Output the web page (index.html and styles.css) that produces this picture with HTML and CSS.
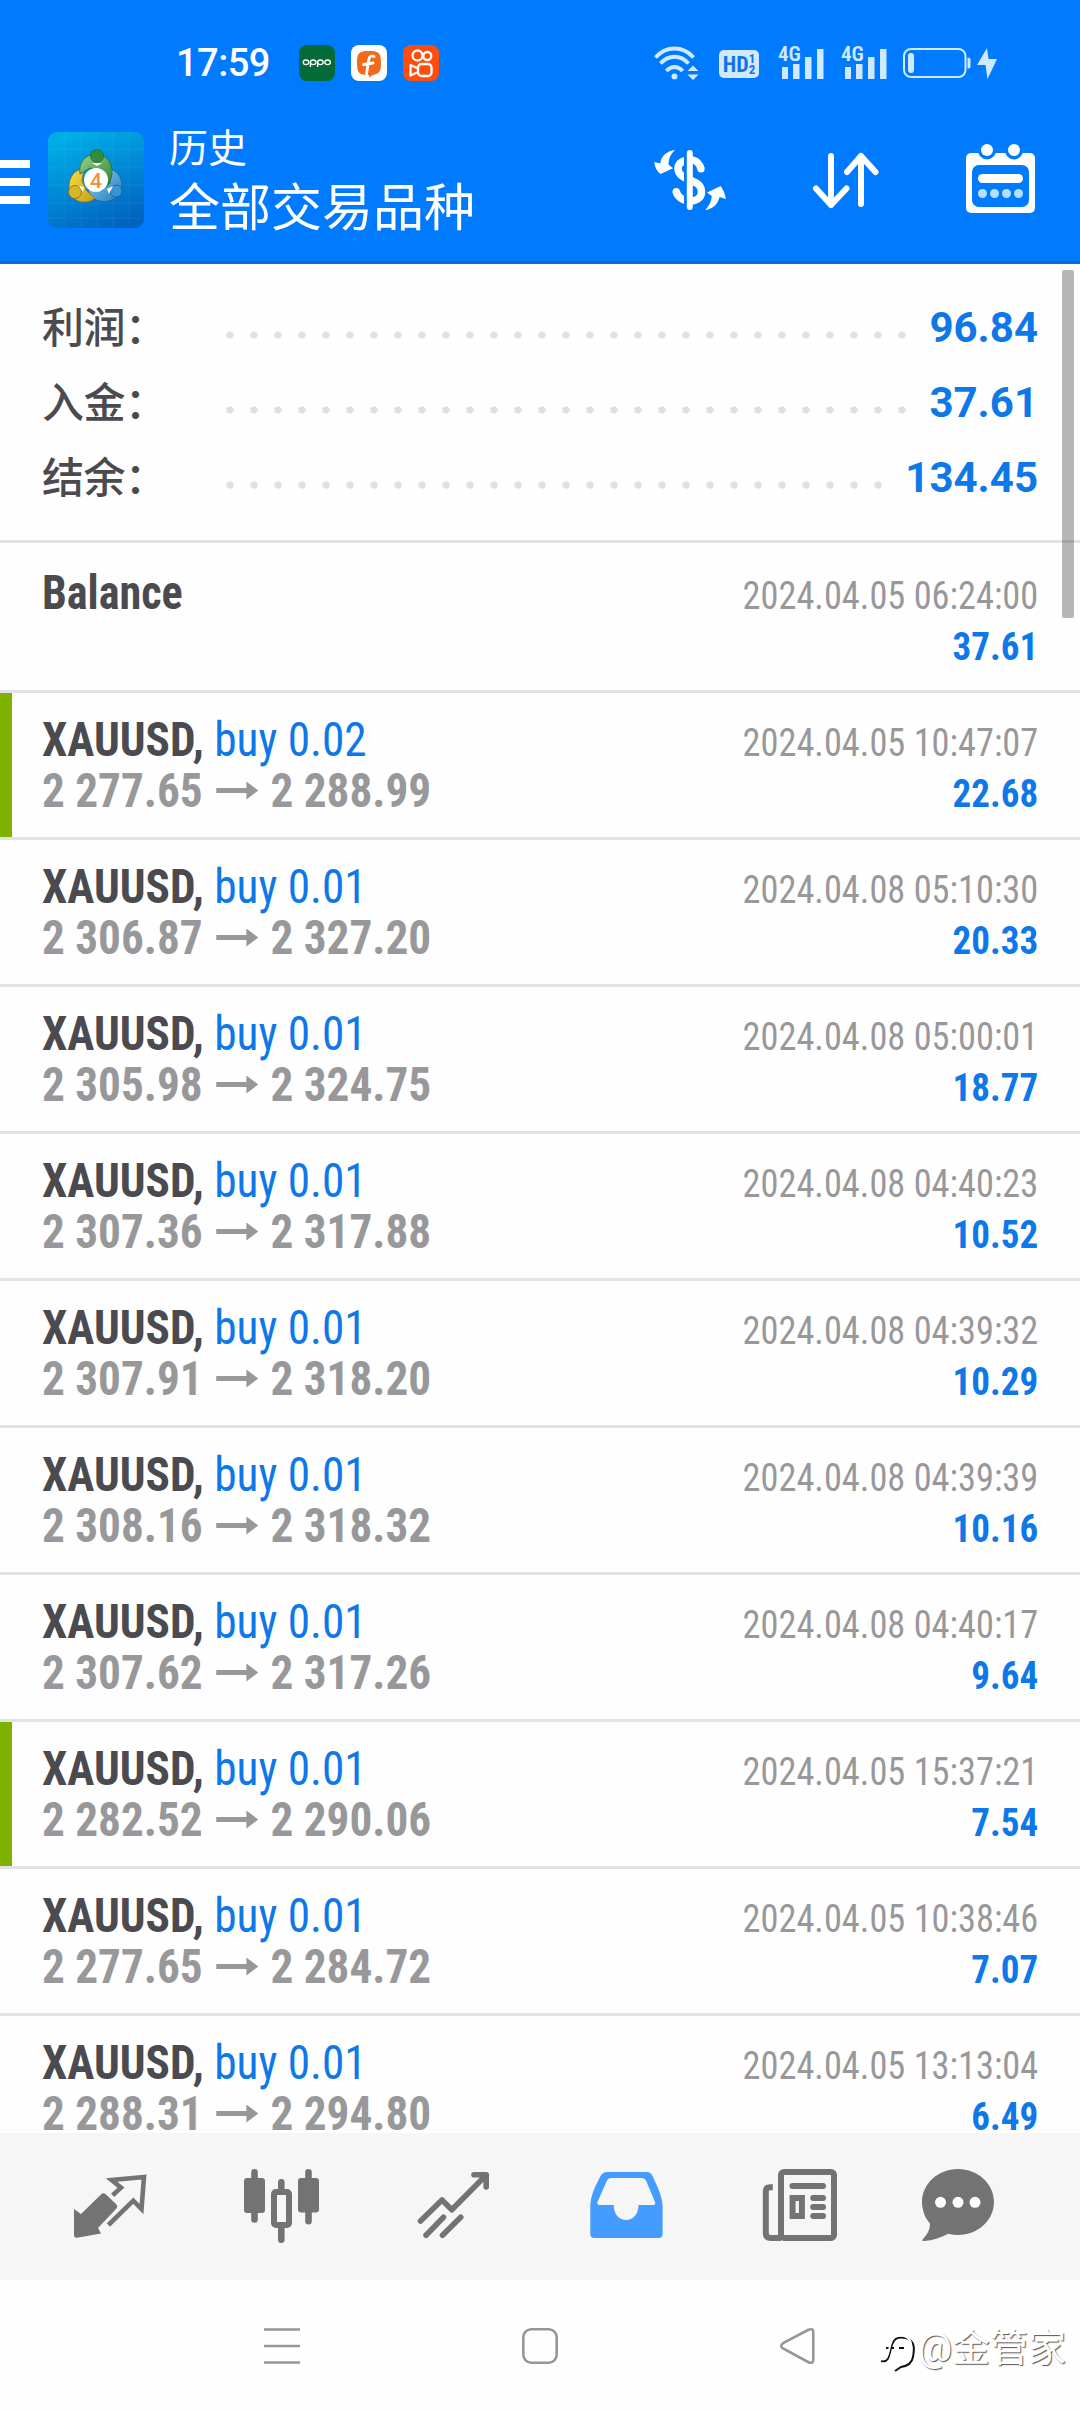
FILE: index.html
```
<!DOCTYPE html>
<html lang="zh-CN">
<head>
    <meta charset="UTF-8">
    <meta name="viewport" content="width=device-width, initial-scale=1.0">
    <title>历史</title>
    <link rel="stylesheet" href="styles.css">
</head>
<body>
    <div class="header">
        <div class="status">
            <span class="time">17:59</span>
            <svg class="app" viewBox="0 0 36 36">
                <rect width="36" height="36" rx="8" fill="#046a38"/>
                <g fill="none" stroke="#fff" stroke-width="1.3">
                    <ellipse cx="7" cy="17.3" rx="2.8" ry="2.3"/>
                    <ellipse cx="14.2" cy="17.3" rx="2.8" ry="2.3"/>
                    <path d="M11.4 17v5"/>
                    <ellipse cx="21.4" cy="17.3" rx="2.8" ry="2.3"/>
                    <path d="M18.6 17v5"/>
                    <ellipse cx="28.6" cy="17.3" rx="2.8" ry="2.3"/>
                </g>
            </svg>
            <svg class="app" viewBox="0 0 36 36">
                <rect width="36" height="36" rx="8" fill="#fff"/>
                <path d="M18 6c10 0 12 2 12 12 0 9-2 11-9 12.2L18 33l.5-2.800C8 30 6 28 6 18 6 8 8 6 18 6z" fill="#f26a1b"/>
                <path d="M23 11.500c-3-1.500-4.700 0-5.200 3L15.500 29M12.500 19.500l9.500-1.500" fill="none" stroke="#fff" stroke-width="2.800" stroke-linecap="round"/>
            </svg>
            <svg class="app" viewBox="0 0 36 36">
                <rect width="36" height="36" rx="8" fill="#ff4d0d"/>
                <g fill="none" stroke="#fff" stroke-width="2.300">
                    <circle cx="14.500" cy="10.500" r="5"/>
                    <circle cx="24.300" cy="11" r="4"/>
                    <rect x="15" y="19" width="13.500" height="12" rx="3.500"/>
                    <path d="M14 23l-6.500-3v10.500l6.500-3" stroke-linejoin="round"/>
                </g>
            </svg>

            <svg class="wifi" viewBox="0 0 44 34">
                <g fill="none" stroke="#cfeaff" stroke-width="4">
                    <path d="M1.500 11.500C12-.5 29-.5 39.500 11.500"/>
                    <path d="M6.500 17.500c8-9 20-9 28 0"/>
                    <path d="M12.300 25c5-5.500 11.400-5.500 16.400 0"/>
                </g>
                <circle cx="20.500" cy="30.500" r="3" fill="#cfeaff"/>
                <path d="M33.500 25h11L39 19.500zM33.500 28.500h11L39 34z" fill="#cfeaff"/>
            </svg>
            <span class="hd">HD<span class="hd-num"><i>1</i><i>2</i></span></span>
            <span class="signal">
                <span class="net">4G</span>
                <svg viewBox="0 0 46 32"><path d="M4 20h6v12H4zM15 17h6.500v15H15zM27 10h6.500v22H27zM39 2h6.500v30H39z" fill="#cfeaff"/></svg>
            </span>
            <span class="signal">
                <span class="net">4G</span>
                <svg viewBox="0 0 46 32"><path d="M4 20h6v12H4zM15 17h6.500v15H15zM27 10h6.500v22H27zM39 2h6.500v30H39z" fill="#cfeaff"/></svg>
            </span>
            <svg class="battery" viewBox="0 0 96 32">
                <rect x="1" y="2" width="61.500" height="28" rx="7" fill="none" stroke="#cfeaff" stroke-width="2"/>
                <rect x="5" y="6" width="6" height="20" rx="3" fill="#cfeaff"/>
                <path d="M64.500 10.500q3 0 3 2v7q0 2-3 2z" fill="#cfeaff"/>
                <path d="M84 1L74 18h8.500L84.500 32 94 12h-8.500z" fill="#cfeaff"/>
            </svg>
        </div>

        <div class="toolbar">
            <div class="menu"><i></i><i></i><i></i></div>
            <svg class="logo" viewBox="0 0 96 96">
                <defs>
                    <linearGradient id="bg" x1="0.3" y1="0" x2="0.7" y2="1">
                        <stop offset="0" stop-color="#00aee6"/>
                        <stop offset="0.5" stop-color="#0088d6"/>
                        <stop offset="1" stop-color="#0063be"/>
                    </linearGradient>
                    <linearGradient id="green" x2="1" y2="1"><stop offset="0" stop-color="#9bd08a"/><stop offset="1" stop-color="#2b8334"/></linearGradient>
                    <linearGradient id="yellow" x2="1" y2="1"><stop offset="0" stop-color="#f6df3c"/><stop offset="1" stop-color="#c59d1d"/></linearGradient>
                    <linearGradient id="blue" x2="1" y2="1"><stop offset="0" stop-color="#9bd6f5"/><stop offset="1" stop-color="#1878bd"/></linearGradient>
                </defs>
                <rect width="96" height="96" rx="9" fill="url(#bg)"/>
                <path d="M17 0v96M33 0v96M49 0v96M65 0v96M81 0v96M0 17h96M0 35h96M0 53h96M0 71h96M0 86h96" stroke="#fff" stroke-opacity="0.06" fill="none"/>
                <g stroke-width="0.8">
                    <path d="M61 36c11 4 16 14 11 25-3 7-13 10-21 8-6-2-10-6-11-12l14 2 8-8z" fill="url(#blue)" stroke="#135f99"/>
                    <path d="M36 37c-10 0-15 9-15 18 0 10 8 16 17 15 4 0 7-2 9-4l-8-7-5-10z" fill="url(#yellow)" stroke="#80701e"/>
                    <path d="M32 42c-2-12 6-20 16-20 11 0 17 10 16 20-1 6-3 10-6 13l-4-16-12-3z" fill="url(#green)" stroke="#226b33"/>
                    <circle cx="49" cy="24" r="6.5" fill="#338d3b" stroke="#226b33"/>
                    <circle cx="27" cy="60" r="6.5" fill="#d7b629" stroke="#80701e"/>
                    <circle cx="68" cy="59" r="6" fill="#3795d1" stroke="#135f99"/>
                </g>
                <path d="M49 34l-5-3h10zM36 55l-5-1 4 6zM59 57l6-3-4 8z" fill="#fff"/>
                <circle cx="48" cy="48" r="12" fill="#fff"/>
                <text x="48" y="55.5" text-anchor="middle" class="four">4</text>
            </svg>
            <div class="titles">
                <div class="sub">历史</div>
                <div class="main">全部交易品种</div>
            </div>
            <svg class="tool" viewBox="0 0 72 72">
                <path d="M47 25c-1-5-5-9-10-9-8 0-13 3-13 8.500 0 6.500 6 9 12 11.500 7 3 11.500 5 11.500 12 0 6-5.500 9-11.500 9-7 0-12.500-4-14-10" fill="none" stroke="#fff" stroke-width="7.500"/>
                <circle cx="47" cy="25" r="3.600" fill="#fff"/>
                <circle cx="22.200" cy="47.500" r="3.600" fill="#fff"/>
                <path d="M31.500 10v52M40 10" stroke="#007aff" stroke-width="3"/>
                <path d="M35.800 9v54" stroke="#fff" stroke-width="6" stroke-linecap="round"/>
                <path d="M21 6c-5 5-6 8-6.500 14.500L19 24.300 6.500 30Q1 26 .3 18l6 1.500C7 11 14 7 21 6zM51.300 66c4-5 6-8 6.500-14L53 48.500 66.800 42Q71 48 72 55l-6.500-2C64 60 59 65 51.300 66z" fill="#fff"/>
            </svg>
            <svg class="tool" viewBox="0 0 72 72">
                <path d="M21 12v49M6 44.500L21 61l15.500-16.500M51 60V12M37 28L51 12l14.500 16" fill="none" stroke="#fff" stroke-width="6" stroke-linecap="round" stroke-linejoin="round"/>
            </svg>
            <svg class="tool" viewBox="0 0 72 72">
                <rect x="0" y="9" width="69" height="60" rx="5" fill="#fff"/>
                <circle cx="21" cy="6.500" r="9" fill="#007aff"/>
                <circle cx="48" cy="6.500" r="9" fill="#007aff"/>
                <rect x="6" y="21" width="57" height="42" rx="7" fill="#007aff"/>
                <circle cx="21" cy="6" r="6" fill="#fff"/>
                <circle cx="48" cy="6" r="6" fill="#fff"/>
                <rect x="12" y="30" width="45" height="9" rx="4.500" fill="#fff"/>
                <g fill="#b5e0ff"><circle cx="16.500" cy="49.500" r="4.500"/><circle cx="28.500" cy="49.500" r="4.500"/><circle cx="40.500" cy="49.500" r="4.500"/><circle cx="52.500" cy="49.500" r="4.500"/></g>
            </svg>
        </div>
    </div>

    <div class="content">
        <div class="scrollbar"></div>

        <div class="summary">
            <div class="line"><span class="label">利润：</span><span class="dots"></span><b>96.84</b></div>
            <div class="line"><span class="label">入金：</span><span class="dots"></span><b>37.61</b></div>
            <div class="line"><span class="label">结余：</span><span class="dots"></span><b>134.45</b></div>
        </div>

        <div class="deal balance">
            <div class="left"><div class="symbol">Balance</div></div>
            <div class="right"><div class="date">2024.04.05 06:24:00</div><div class="profit">37.61</div></div>
        </div>
        <div class="deal tp">
            <div class="left"><div class="symbol">XAUUSD, <span>buy 0.02</span></div><div class="price">2 277.65<i class="arrow"></i>2 288.99</div></div>
            <div class="right"><div class="date">2024.04.05 10:47:07</div><div class="profit">22.68</div></div>
        </div>
        <div class="deal">
            <div class="left"><div class="symbol">XAUUSD, <span>buy 0.01</span></div><div class="price">2 306.87<i class="arrow"></i>2 327.20</div></div>
            <div class="right"><div class="date">2024.04.08 05:10:30</div><div class="profit">20.33</div></div>
        </div>
        <div class="deal">
            <div class="left"><div class="symbol">XAUUSD, <span>buy 0.01</span></div><div class="price">2 305.98<i class="arrow"></i>2 324.75</div></div>
            <div class="right"><div class="date">2024.04.08 05:00:01</div><div class="profit">18.77</div></div>
        </div>
        <div class="deal">
            <div class="left"><div class="symbol">XAUUSD, <span>buy 0.01</span></div><div class="price">2 307.36<i class="arrow"></i>2 317.88</div></div>
            <div class="right"><div class="date">2024.04.08 04:40:23</div><div class="profit">10.52</div></div>
        </div>
        <div class="deal">
            <div class="left"><div class="symbol">XAUUSD, <span>buy 0.01</span></div><div class="price">2 307.91<i class="arrow"></i>2 318.20</div></div>
            <div class="right"><div class="date">2024.04.08 04:39:32</div><div class="profit">10.29</div></div>
        </div>
        <div class="deal">
            <div class="left"><div class="symbol">XAUUSD, <span>buy 0.01</span></div><div class="price">2 308.16<i class="arrow"></i>2 318.32</div></div>
            <div class="right"><div class="date">2024.04.08 04:39:39</div><div class="profit">10.16</div></div>
        </div>
        <div class="deal">
            <div class="left"><div class="symbol">XAUUSD, <span>buy 0.01</span></div><div class="price">2 307.62<i class="arrow"></i>2 317.26</div></div>
            <div class="right"><div class="date">2024.04.08 04:40:17</div><div class="profit">9.64</div></div>
        </div>
        <div class="deal tp">
            <div class="left"><div class="symbol">XAUUSD, <span>buy 0.01</span></div><div class="price">2 282.52<i class="arrow"></i>2 290.06</div></div>
            <div class="right"><div class="date">2024.04.05 15:37:21</div><div class="profit">7.54</div></div>
        </div>
        <div class="deal">
            <div class="left"><div class="symbol">XAUUSD, <span>buy 0.01</span></div><div class="price">2 277.65<i class="arrow"></i>2 284.72</div></div>
            <div class="right"><div class="date">2024.04.05 10:38:46</div><div class="profit">7.07</div></div>
        </div>
        <div class="deal">
            <div class="left"><div class="symbol">XAUUSD, <span>buy 0.01</span></div><div class="price">2 288.31<i class="arrow"></i>2 294.80</div></div>
            <div class="right"><div class="date">2024.04.05 13:13:04</div><div class="profit">6.49</div></div>
        </div>
    </div>

    <div class="tabs">
        <svg viewBox="0 0 96 96">
            <path d="M12 50l7 5 20-19.500q2.300-2.500 5 0L54 45q2.500 2.500 0 5L36 69l3 5.500-24 4.200q-3 .3-3-2.700z" fill="#737373"/>
            <path d="M50.600 36.300l8.400-7.600-9.400-7.700L82 18l-2.500 32-8.200-8.300L46.400 66" fill="none" stroke="#737373" stroke-width="4.600"/>
        </svg>
        <svg viewBox="0 0 96 96">
            <path d="M20.500 13.200v47.300M47.300 23.200V32M47.300 68v12.700M74.500 13.200v49" stroke="#737373" stroke-width="6.600" stroke-linecap="round"/>
            <rect x="10" y="19" width="21" height="35" rx="3" fill="#737373"/>
            <rect x="40" y="33" width="15" height="33" rx="2" fill="none" stroke="#737373" stroke-width="6"/>
            <rect x="64" y="19" width="21" height="34.500" rx="3" fill="#737373"/>
        </svg>
        <svg viewBox="0 0 96 96">
            <path d="M14.500 62L36 41l9.800 9.700L80.200 16M68 15.700h12.200V28M20 76.300l17.500-18M36.500 76.300l18.200-18" fill="none" stroke="#737373" stroke-width="5.600" stroke-linecap="round" stroke-linejoin="round"/>
        </svg>
        <svg viewBox="0 0 96 96">
            <path d="M29 13h40q4 0 6 5c4 9 9.600 19 9.600 30v27q0 4-4 4H16.300q-4 0-4-4V48c0-11 5-21 9.700-30q2.500-5 7-5zM33 19q-3 0-4 2.500L19.500 43q-1 3 2 3h14.200c0 20 24.800 20 24.800 0H75q3 0 2-3l-9-21.500Q67 19 64 19z" fill="#459cff" fill-rule="evenodd"/>
        </svg>
        <svg viewBox="0 0 96 96">
            <g fill="none" stroke="#737373" stroke-width="6">
                <rect x="31" y="13" width="53" height="66" rx="3"/>
                <path d="M22.800 28.300H20q-4.200 0-4.200 4.200V74q0 5 5 5H31"/>
                <rect x="42.600" y="39" width="9.300" height="18"/>
                <path d="M42.500 27h30.500M63.200 38.900h9.800M63.200 47.900h9.800M63.200 56.900h9.800" stroke-linecap="round"/>
            </g>
        </svg>
        <svg class="chat" viewBox="0 0 96 96">
            <path d="M49 10c20 0 36 15 36 33S69 76 49 76q-5 0-9.500-1.200C31 79 24 81.500 15 82q-3 0-1-2 7-7 7-15.500C16 59 13 51 13 43c0-18 16-33 36-33z" fill="#737373"/>
            <g fill="#fff"><circle cx="31.500" cy="43.300" r="5.500"/><circle cx="49" cy="43.300" r="5.500"/><circle cx="66" cy="43.300" r="5.500"/></g>
        </svg>
    </div>

    <div class="nav">
        <svg viewBox="0 0 36 36"><path d="M0 1.500h36M0 18h36M0 34.500h36"/></svg>
        <svg viewBox="0 0 36 36"><rect x="1.300" y="1.300" width="33.400" height="33.400" rx="8"/></svg>
        <svg viewBox="0 0 36 36"><path d="M3 15.200L28.500 1.800q4.800-2 4.800 2.500v27.400q0 4.500-4.800 2.500L3 20.500q-3.500-2.600 0-5.300z"/></svg>
    </div>

    <div class="watermark">
        <svg viewBox="0 0 38 42">
            <path d="M2 30c7 2 8-4 10-13 2-9 6-12 15-10 8 3 9 8 7 19-1 6-5 9-12 10l-6 4M7 17h8M20 17h5" fill="none" stroke="#111" stroke-width="2"/>
            <path d="M1 28c7 2 8-4 10-13 2-9 6-12 14-10 8 3 8 8 6 18-1 6-5 9-12 10" fill="none" stroke="#fff" stroke-width="2"/>
        </svg>
        <span>@金管家</span>
    </div>
</body>
</html>
```

FILE: styles.css
```
body {
    margin: 0;
    width: 1080px;
    height: 2412px;
    position: relative;
    overflow: hidden;
    display: flex;
    flex-direction: column;
    background-color: #fefefe;
    font-family: Roboto, 'Noto Sans CJK SC', sans-serif;
}

i {
    font-style: normal;
}

svg {
    display: block;
    flex-shrink: 0;
    overflow: visible;
}

/* header */

.header {
    height: 261px;
    flex-shrink: 0;
    background-color: #007aff;
    border-bottom: 3px solid #1467d3;
    color: white;
}

.status {
    height: 36px;
    padding: 45px 0 0 176px;
    display: flex;
    align-items: center;
}

.time {
    width: 123px;
    flex-shrink: 0;
    font-size: 38px;
    font-weight: 500;
    letter-spacing: -0.5px;
}

.app {
    width: 36px;
    height: 36px;
    margin-right: 16px;
}

.wifi {
    width: 44px;
    height: 34px;
    margin-left: 199px;
}

.hd {
    width: 40px;
    height: 28px;
    flex-shrink: 0;
    margin-left: 21px;
    margin-top: 2px;
    border-radius: 5px;
    background-color: #cfeaff;
    color: #1473e6;
    display: flex;
    align-items: center;
    justify-content: center;
    font-size: 22px;
    font-weight: 700;
    font-stretch: 75%;
}

.hd-num {
    display: flex;
    flex-direction: column;
    font-size: 13px;
    line-height: 11px;
}

.signal {
    position: relative;
    width: 46px;
    flex-shrink: 0;
    margin-left: 17px;
}

.signal svg {
    width: 46px;
    height: 32px;
}

.net {
    position: absolute;
    left: 0;
    top: -3px;
    font-size: 21px;
    line-height: 21px;
    font-weight: 600;
    font-stretch: 75%;
    color: #cfeaff;
}

.hd + .signal {
    margin-left: 19px;
}

.battery {
    width: 96px;
    height: 32px;
    margin-left: 16px;
}

.toolbar {
    height: 120px;
    padding-top: 39px;
    display: flex;
    align-items: center;
}

.menu {
    width: 30px;
    flex-shrink: 0;
    margin-right: 18px;
    display: flex;
    flex-direction: column;
    gap: 10px;
    margin-top: 4px;
}

.menu i {
    height: 8px;
    background-color: white;
}

.logo {
    width: 96px;
    height: 96px;
}

.four {
    font-size: 21px;
    font-weight: 500;
    fill: #f0923c;
}

.titles {
    width: 485px;
    flex-shrink: 0;
    margin-left: 25px;
    padding-top: 8px;
}

.sub {
    font-size: 39px;
    line-height: 50px;
}

.main {
    font-size: 51px;
    line-height: 70px;
}

.tool {
    width: 72px;
    height: 72px;
    margin-right: 84px;
}

.tool:last-child {
    margin-right: 0;
}

/* history list */

.content {
    height: 1869px;
    flex-shrink: 0;
    position: relative;
    overflow: hidden;
}

.scrollbar {
    position: absolute;
    left: 1062px;
    top: 6px;
    width: 12px;
    height: 348px;
    border-radius: 2px;
    background-color: rgba(0, 0, 0, 0.28);
}

.summary {
    height: 225px;
    padding: 26px 42px 25px;
    border-bottom: 3px solid #e3e3e3;
}

.line {
    height: 75px;
    display: flex;
    align-items: center;
    font-size: 42px;
}

.label {
    width: 182px;
    margin-top: -6px;
    color: #4a4a4f;
    font-weight: 500;
    letter-spacing: -0.5px;
}

.dots {
    flex: 1;
    height: 8px;
    margin: 15px 12px 0 0;
    background: radial-gradient(circle at 6px 4px, #e0e0e0 3.2px, transparent 4.2px) 0 0 / 24px 8px repeat-x;
}

.line b {
    color: #0f78e8;
}

.deal {
    height: 144px;
    padding: 0 42px;
    border-bottom: 3px solid #e3e3e3;
    display: flex;
    justify-content: space-between;
    font-stretch: 75%;
    line-height: 51px;
}

.left {
    padding-top: 21px;
    transform: scaleX(0.942);
    transform-origin: left;
}

.right {
    padding-top: 25px;
    text-align: right;
    font-size: 39px;
}

.balance {
    height: 147px;
}

.balance .left {
    padding-top: 24px;
    transform: scaleX(0.92);
}

.balance .right {
    padding-top: 28px;
}

.tp {
    background: linear-gradient(#80b000, #80b000) 0 0 / 12px 144px no-repeat;
}

.symbol {
    font-size: 48px;
    font-weight: 700;
    color: #4a4a4f;
}

.symbol span {
    font-weight: 400;
    color: #0f78e8;
}

.price {
    font-size: 48px;
    font-weight: 700;
    color: #98989b;
    display: flex;
    align-items: center;
}

.arrow {
    width: 45px;
    height: 18px;
    margin: 0 13px 0 14px;
    background-color: #98989b;
    clip-path: polygon(0 36%, 72% 36%, 72% 0, 100% 50%, 72% 100%, 72% 64%, 0 64%);
}

.date {
    color: #98989b;
    transform: scaleX(0.932);
    transform-origin: right;
}

.profit {
    font-weight: 700;
    color: #0f78e8;
    transform: scaleX(0.95);
    transform-origin: right;
}

/* bottom */

.tabs {
    height: 147px;
    flex-shrink: 0;
    padding-left: 62px;
    display: flex;
    align-items: center;
    gap: 76px;
    background-color: #f6f6f6;
}

.tabs svg {
    width: 96px;
    height: 96px;
}

.tabs .chat {
    margin-left: -13px;
}

.nav {
    flex: 1;
    display: flex;
    align-items: center;
    justify-content: center;
    gap: 222px;
}

.nav svg {
    width: 36px;
    height: 36px;
    fill: none;
    stroke: #969696;
    stroke-width: 2.6px;
}

.watermark {
    position: absolute;
    left: 879px;
    top: 2322px;
    display: flex;
    align-items: center;
    gap: 1px;
    font-size: 38px;
    line-height: 52px;
    color: white;
    text-shadow: 1px 1px 1px #555;
}

.watermark svg {
    width: 38px;
    height: 42px;
    margin-top: 8px;
}
```
